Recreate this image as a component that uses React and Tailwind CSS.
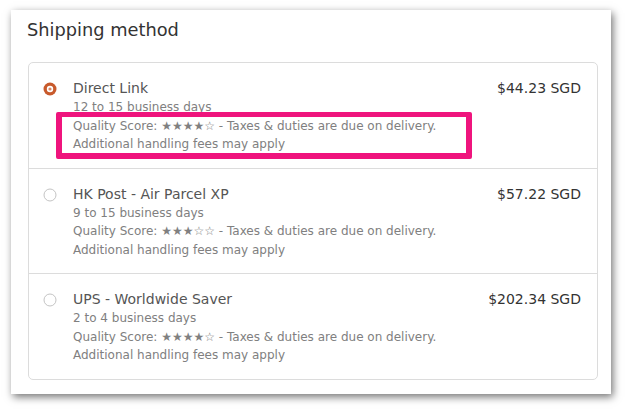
import React from "react";

const rows = [
  { name: "Direct Link", days: "12 to 15 business days", stars: "★★★★☆", price: "$44.23 SGD", selected: true },
  { name: "HK Post - Air Parcel XP", days: "9 to 15 business days", stars: "★★★☆☆", price: "$57.22 SGD", selected: false },
  { name: "UPS - Worldwide Saver", days: "2 to 4 business days", stars: "★★★★☆", price: "$202.34 SGD", selected: false },
];

function Radio({ selected }) {
  return (
    <svg width="14" height="14" viewBox="0 0 14 14" className="shrink-0">
      {selected ? (
        <>
          <circle cx="7" cy="7" r="6.5" fill="#c85a2c" />
          <circle cx="7" cy="7" r="3.2" fill="#fff" />
          <circle cx="7" cy="7" r="1.6" fill="#d98a68" />
        </>
      ) : (
        <circle cx="7" cy="7" r="6" fill="#fff" stroke="#c4c4c4" strokeWidth="1" />
      )}
    </svg>
  );
}

export default function App() {
  return (
    <div className="relative w-[630px] h-[413px] bg-white overflow-hidden" style={{ fontFamily: '"DejaVu Sans", sans-serif' }}>
      <div className="ml-[11px] mt-[10px] w-[600px] h-[384px] bg-white shadow-[2px_3px_8px_rgba(0,0,0,0.55)] pt-[8px]">
        <div className="pl-[16px] text-[17.8px] leading-[24px] text-[#333]">Shipping method</div>
        <div className="ml-[17px] mt-[20px] w-[570px] border border-[#dcdcdc] rounded-[5px]">
          {rows.map((r, i) => (
            <div key={i} className={`flex pl-[14px] pr-[16px] pt-[16px] pb-[14px] ${i > 0 ? "border-t border-[#dcdcdc]" : ""}`}>
              <div className="w-[30px] pt-[3px]">
                <Radio selected={r.selected} />
              </div>
              <div className="flex-1">
                <div className="text-[14px] leading-[19px] text-[#555]">{r.name}</div>
                <div className="text-[12px] leading-[18.5px] text-[#808080]">
                  <div>{r.days}</div>
                  <div>Quality Score: <span className="text-[12px]">{r.stars}</span> - Taxes &amp; duties are due on delivery.</div>
                  <div>Additional handling fees may apply</div>
                </div>
              </div>
              <div className="text-[14px] leading-[19px] text-[#333]">{r.price}</div>
            </div>
          ))}
        </div>
      </div>
      <div className="absolute left-[56px] top-[112px] w-[416px] h-[47px] border-[6px] border-t-[5px] border-[#ef147d] rounded-[2px]" />
    </div>
  );
}
